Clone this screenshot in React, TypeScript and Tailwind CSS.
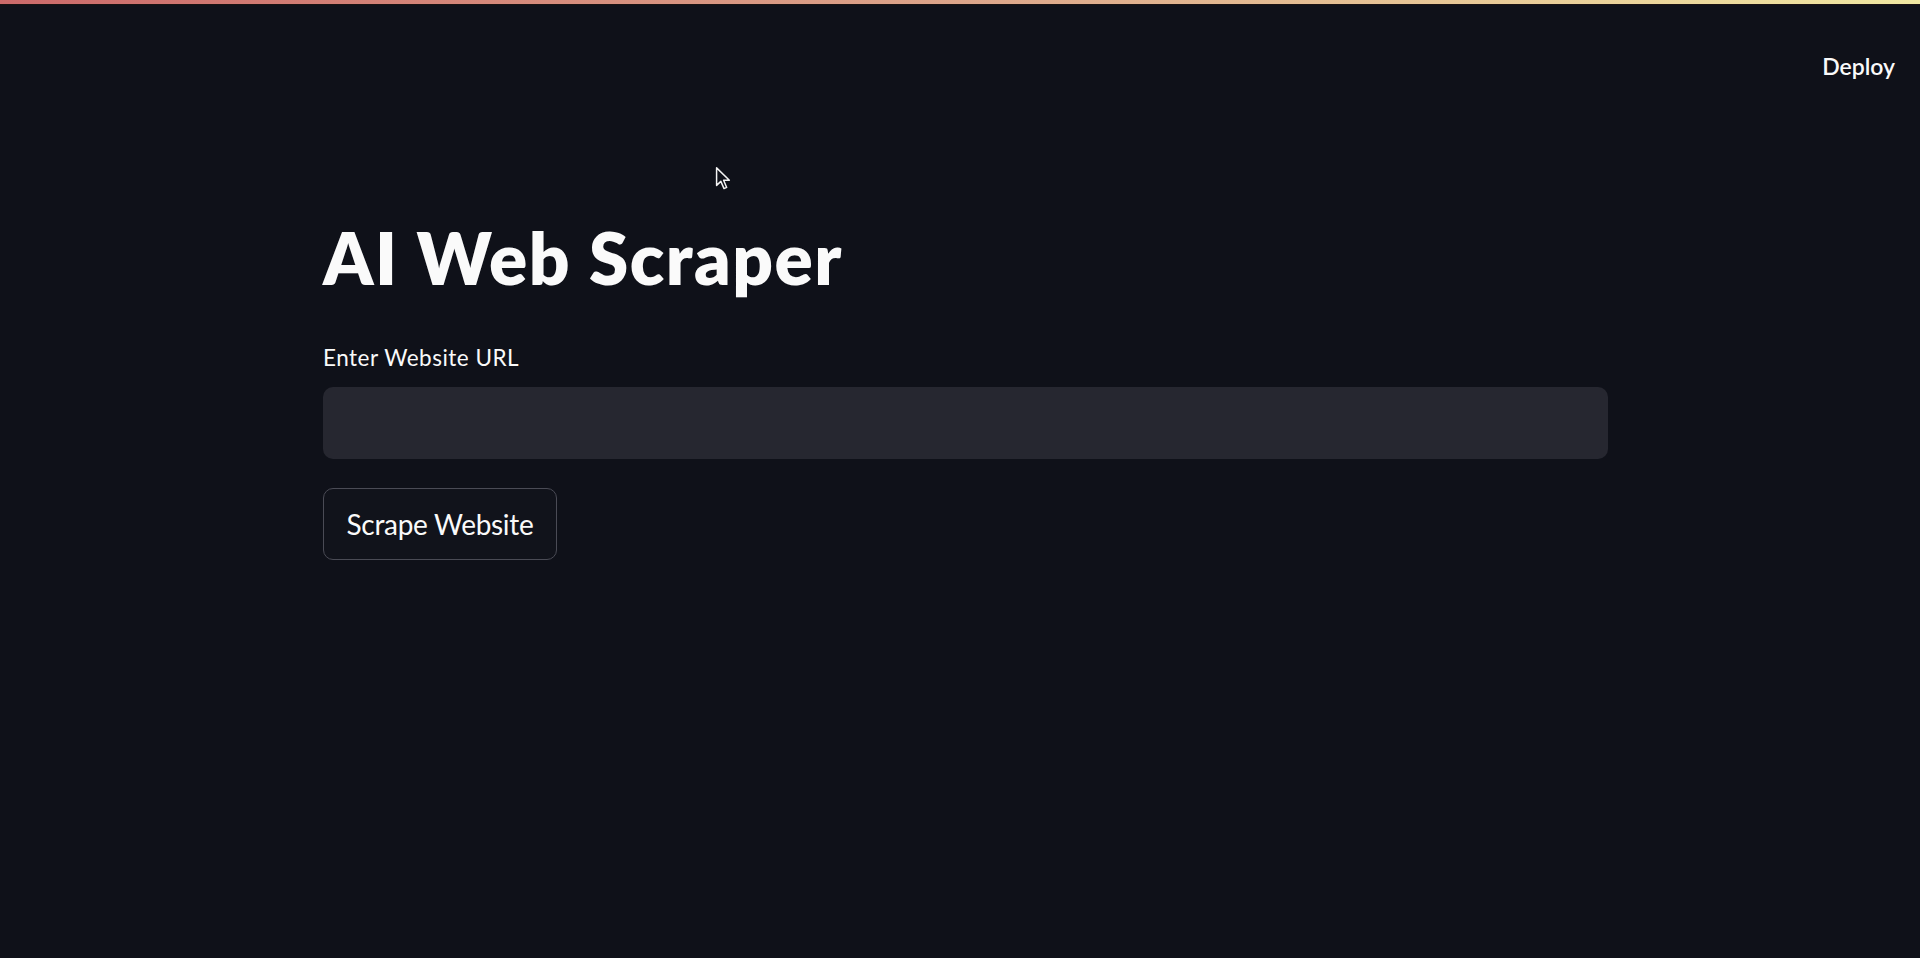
import React from "react";

export default function App() {
  return (
    <div
      className="relative min-h-[958px] w-full overflow-hidden bg-[#0f1119] text-[#fafafa]"
      style={{ fontFamily: "Lato, 'Noto Sans', sans-serif" }}
    >
      <div className="h-[4px] w-full bg-gradient-to-r from-[#cc6a6a] via-[#dca58a] to-[#f0e8a2]" />
      <div className="h-[1px] w-full bg-[#1a1212]" />
      <header className="flex justify-end pr-[25px] pt-[47px]">
        <span className="text-[23px] leading-[28px] font-semibold">Deploy</span>
      </header>
      <main className="ml-[323px] mt-[135px] flex w-[1285px] flex-col">
        <h1 className="text-[71px] leading-[85px] font-extrabold tracking-[1.5px]">AI Web Scraper</h1>
        <label className="mt-[44px] text-[22.5px] leading-[27px] tracking-[0.5px]">Enter Website URL</label>
        <div className="mt-[16px] h-[72px] w-full rounded-[10px] bg-[#262730]" />
        <button className="mt-[29px] flex h-[72px] w-[234px] items-center justify-center rounded-[10px] border border-[#4a4b55] bg-[#11131b] text-[28px] leading-[34px] tracking-[-0.3px] text-[#fafafa]">
          Scrape Website
        </button>
      </main>
      <svg
        className="absolute left-[715px] top-[166px]"
        width="17"
        height="25"
        viewBox="0 0 16 23"
      >
        <path
          d="M1.5 1.5 L1.5 18 L5.5 14.2 L8.5 21 L11 19.9 L8.1 13.2 L13.5 13.2 Z"
          fill="#0f1119"
          stroke="#f4f4f4"
          strokeWidth="1.4"
          strokeLinejoin="round"
        />
      </svg>
    </div>
  );
}
